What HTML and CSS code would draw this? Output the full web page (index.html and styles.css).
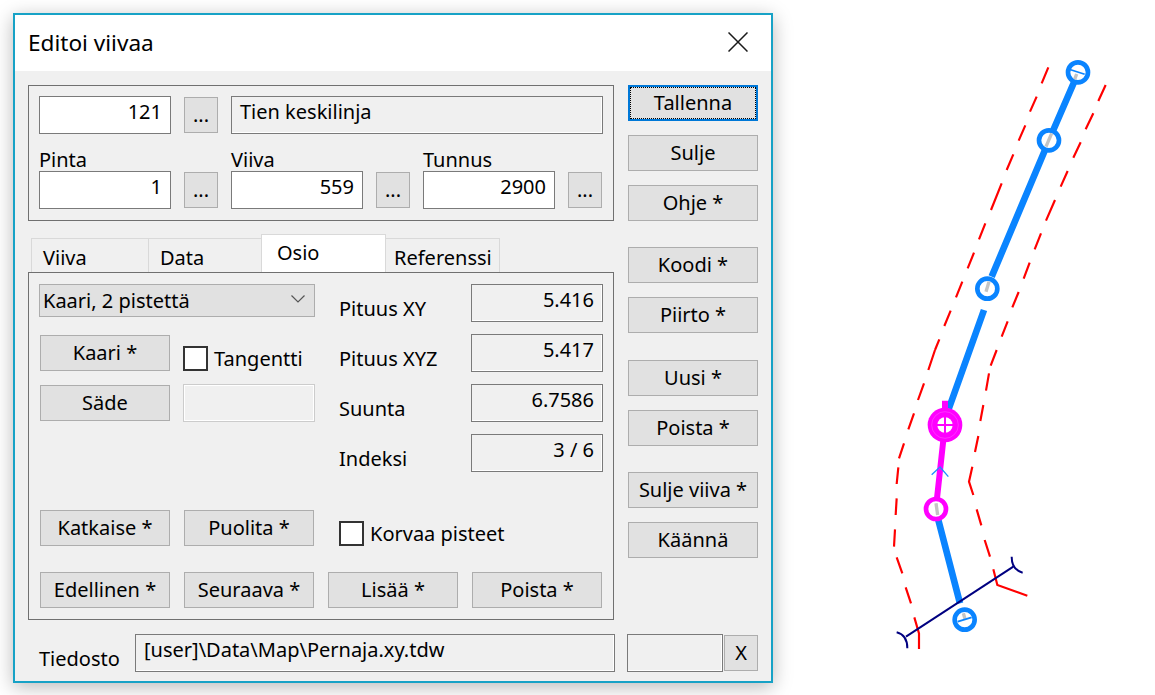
FILE: index.html
```html
<!DOCTYPE html>
<html lang="fi">
<head>
<meta charset="utf-8">
<title>Editoi viivaa</title>
<link rel="stylesheet" href="styles.css">
</head>
<body>
<div class="page">
  <div class="window">
    <div class="titlebar">
      <span class="title">Editoi viivaa</span>
      <svg class="close" width="20" height="20" viewBox="0 0 20 20"><path d="M0.5 0.5L19.5 19.5M19.5 0.5L0.5 19.5"/></svg>
    </div>
    <div class="client">
      <div class="top">
        <div class="main">
          <div class="group">
            <div class="field edit">121</div>
            <button class="btn small">...</button>
            <div class="field text wide">Tien keskilinja</div>
            <div class="cap c1">Pinta</div>
            <div class="cap c3">Viiva</div>
            <div class="cap c5">Tunnus</div>
            <div class="field edit">1</div>
            <button class="btn small">...</button>
            <div class="field edit">559</div>
            <button class="btn small">...</button>
            <div class="field edit">2900</div>
            <button class="btn small">...</button>
          </div>
          <div class="tabs">
            <div class="tab t1">Viiva</div>
            <div class="tab t2">Data</div>
            <div class="tab t3 active">Osio</div>
            <div class="tab t4">Referenssi</div>
          </div>
          <div class="panel">
            <div class="upper">
              <div class="left">
                <div class="combo">
                  <span>Kaari, 2 pistettä</span>
                  <svg width="14" height="8" viewBox="0 0 14 8"><path d="M0.5 0.5L7 7L13.5 0.5"/></svg>
                </div>
                <div class="opt-row">
                  <button class="btn">Kaari *</button>
                  <label class="check"><span class="box"></span>Tangentti</label>
                </div>
                <div class="opt-row second">
                  <button class="btn">Säde</button>
                  <div class="field disabled"></div>
                </div>
              </div>
              <div class="stats">
                <div class="stat-label">Pituus XY</div><div class="field value">5.416</div>
                <div class="stat-label">Pituus XYZ</div><div class="field value">5.417</div>
                <div class="stat-label">Suunta</div><div class="field value">6.7586</div>
                <div class="stat-label">Indeksi</div><div class="field value">3 / 6</div>
              </div>
            </div>
            <div class="btn-row middle">
              <button class="btn">Katkaise *</button>
              <button class="btn">Puolita *</button>
              <label class="check far"><span class="box"></span>Korvaa pisteet</label>
            </div>
            <div class="btn-row bottom">
              <button class="btn">Edellinen *</button>
              <button class="btn">Seuraava *</button>
              <button class="btn">Lisää *</button>
              <button class="btn">Poista *</button>
            </div>
          </div>
        </div>
        <div class="side">
          <div class="side-group">
            <button class="btn focused">Tallenna</button>
            <button class="btn">Sulje</button>
            <button class="btn">Ohje *</button>
          </div>
          <div class="side-group">
            <button class="btn">Koodi *</button>
            <button class="btn">Piirto *</button>
          </div>
          <div class="side-group shifted">
            <button class="btn">Uusi *</button>
            <button class="btn">Poista *</button>
          </div>
          <div class="side-group">
            <button class="btn">Sulje viiva *</button>
            <button class="btn">Käännä</button>
          </div>
        </div>
      </div>
      <div class="footer">
        <div class="foot-label">Tiedosto</div>
        <div class="field text path">[user]\Data\Map\Pernaja.xy.tdw</div>
        <div class="field text mini"></div>
        <button class="btn small x">X</button>
      </div>
    </div>
  </div>
  <svg class="drawing" width="382" height="695" viewBox="773 0 382 695">
    <g transform="translate(880 50) scale(0.33333)">
      <path class="red" d="M505 52L485 100M470 140L450 185M436 226L416 272M400 313L380 360M365 400L333 480M316 520L297 568M282 608L263 655M247 695L228 742M212 782L193 828M178 868L165 900"/>
      <path class="red" d="M677 105L655 153M640 190L617 238M602 277L580 323M563 363L542 410M525 450L498 512M483 550L464 598M449 638L431 686M416 726L397 772M383 814L365 860"/>
      <path class="blue-line" d="M585 90L520 240M495 300L335 680"/>
      <circle class="ring-blue" cx="594" cy="67" r="30"/>
      <path class="gray" d="M590 72L584 88"/>
      <path class="blue-bar" d="M572 59L614 73"/>
      <circle class="ring-blue" cx="507" cy="271" r="30"/>
      <path class="gray" d="M515 250L498 290"/>
      <circle class="ring-blue" cx="322" cy="716" r="30"/>
      <path class="gray" d="M327 695L318 725"/>
    </g>
    <g transform="translate(880 350) scale(0.33333)">
      <path class="red" d="M165 0L145 60M132 100L114 150M102 190L85 238M72 280L57 325M55 352L50 402M50 445L47 495M45 538L42 590M50 622L67 670M77 712L93 760M103 802L117 850L117 897"/>
      <path class="red" d="M350 0L332 47M327 70L318 122M310 165L301 213M295 258L285 306M277 350L267 395L280 435M290 478L304 526M314 570L330 620M340 658L352 705L442 737"/>
      <path class="blue-line" d="M312 -120L205 180M175 510L240 760"/>
      <path class="navy" d="M78 860L400 650"/>
      <path class="navy" d="M50 847C70 852 82 865 82 895M395 620C395 645 405 662 428 668"/>
      <path class="magenta-line" d="M195 152L195 190M190 270L171 445"/>
      <circle class="mag-fill" cx="195" cy="225" r="52"/>
      <circle class="mag-thin" cx="195" cy="225" r="40"/>
      <circle class="white-fill" cx="195" cy="225" r="23"/>
      <path class="mag-cross" d="M195 200L195 250M170 225L220 225"/>
      <path class="chevron" d="M155 374L180 351L205 380"/>
      <circle class="ring-mag" cx="168" cy="477" r="30"/>
      <path class="gray" d="M168 460L173 495"/>
      <circle class="ring-blue" cx="254" cy="809" r="30"/>
      <path class="gray" d="M250 790L255 806"/>
      <path class="blue-bar" d="M233 815L275 802"/>
    </g>
  </svg>
</div>
</body>
</html>
```

FILE: styles.css
```css
* { box-sizing: border-box; }
html, body { margin: 0; padding: 0; background: #fff; }
body { width: 1155px; height: 695px; overflow: hidden; font-family: "Noto Sans", "Open Sans", sans-serif; font-size: 20px; color: #000; }
.page { display: flex; align-items: flex-start; }
.window { flex: none; width: 760px; height: 670px; margin: 13px 0 0 13px; border: 2px solid #17a2c6; background: #f0f0f0; box-shadow: 0 4px 18px rgba(0,0,0,.28); }
.titlebar { height: 56px; background: #fff; display: flex; align-items: center; justify-content: space-between; padding: 0 23px 0 13px; }
.title { font-size: 22.6px; line-height: 30px; }
.close { margin-bottom: 3px; }
.close path { stroke: #1a1a1a; stroke-width: 1.5; fill: none; }
.client { padding: 14px 14px 0 13px; }
.top { display: flex; gap: 14px; height: 535px; }
.main { width: 586px; flex: none; }
.group { border: 1px solid #707070; height: 136px; padding: 10px 0 0 10px; display: grid; grid-template-columns: 132px 34px 132px 34px 132px 34px; column-gap: 13px; grid-template-rows: 38px 37px 38px; align-items: start; }
.field { height: 38px; border: 1px solid #7a7a7a; padding: 0 8px; line-height: 30px; white-space: nowrap; }
.edit { background: #fff; text-align: right; }
.text { box-shadow: inset -1px -1px 0 #fff; }
.wide { grid-column: 3 / 7; margin-right: -1px; }
.cap { line-height: 24px; align-self: end; margin-bottom: -1px; }
.c1 { grid-column: 1 / 3; }
.c3 { grid-column: 3 / 5; }
.c5 { grid-column: 5 / 7; }
.btn { display: block; width: 130px; height: 36px; padding: 0; border: 1px solid #adadad; background: #e1e1e1; color: #000; font: inherit; line-height: 30px; white-space: nowrap; }
.small { width: 34px; margin-top: 1px; }
.focused { border: 2px solid #0078d7; outline: 1px dotted #000; outline-offset: -3px; }
.tabs { display: flex; align-items: flex-end; height: 38px; margin-top: 13px; padding-left: 3px; }
.tab { height: 34px; border: 1px solid #d9d9d9; border-bottom: 0; line-height: 38px; }
.t1 { width: 117px; padding-left: 11px; border-right: 0; }
.t2 { width: 113px; padding-left: 11px; border-right: 0; }
.t3 { width: 125px; padding-left: 15px; }
.t4 { width: 114px; padding-left: 8px; border-left: 0; }
.active { height: 38px; background: #fff; line-height: 36px; }
.panel { height: 348px; border: 1px solid #707070; padding: 11px 10px 0; }
.upper { display: flex; gap: 24px; height: 188px; }
.left { width: 276px; flex: none; }
.combo { height: 33px; border: 1px solid #adadad; background: #e1e1e1; display: flex; align-items: center; justify-content: space-between; padding: 0 9px 0 3px; line-height: 30px; }
.combo svg { margin-bottom: 4px; }
.combo path { stroke: #555; stroke-width: 1.2; fill: none; }
.opt-row { display: flex; margin-top: 18px; height: 36px; }
.opt-row .btn { margin-left: 1px; }
.opt-row.second { margin-top: 13px; height: 38px; align-items: center; }
.check { display: flex; align-items: flex-end; gap: 6px; line-height: 24px; margin-left: 13px; }
.box { display: block; width: 25px; height: 25px; border: 2px solid #333; background: #fff; }
.disabled { width: 132px; margin-left: 13px; border-color: #ccc; box-shadow: inset 0 0 0 1px #fff; }
.stats { width: 264px; display: grid; grid-template-columns: 132px 132px; grid-auto-rows: 38px; row-gap: 12px; }
.stat-label { line-height: 50px; }
.value { text-align: right; box-shadow: inset -1px -1px 0 #fff; }
.btn-row { display: flex; gap: 14px; padding-left: 1px; }
.middle { margin-top: 38px; }
.bottom { margin-top: 26px; }
.far { margin-left: 11px; }
.side { width: 130px; flex: none; display: flex; flex-direction: column; gap: 26px; }
.side-group { display: flex; flex-direction: column; gap: 14px; }
.shifted { margin-top: 1px; }
.footer { display: flex; align-items: flex-start; margin-top: 14px; padding-left: 11px; }
.foot-label { width: 96px; flex: none; line-height: 50px; }
.path { width: 480px; flex: none; }
.mini { width: 96px; flex: none; margin-left: 12px; }
.x { margin-left: 1px; flex: none; }
.drawing { flex: none; display: block; }
.drawing path, .drawing circle { fill: none; }
.red { stroke: #f00; stroke-width: 6.5; }
.blue-line { stroke: #0a84ff; stroke-width: 20; }
.ring-blue { stroke: #0a84ff; stroke-width: 14; fill: #fff !important; }
.ring-mag { stroke: #f0f; stroke-width: 14; fill: #fff !important; }
.gray { stroke: #c4c4c4; stroke-width: 10; }
.blue-bar { stroke: #0a84ff; stroke-width: 5; }
.navy { stroke: #000080; stroke-width: 6; }
.magenta-line { stroke: #f0f; stroke-width: 18; }
.mag-fill { fill: #f0f !important; }
.mag-thin { stroke: #ff60ff; stroke-width: 1.5; }
.white-fill { fill: #fff !important; }
.mag-cross { stroke: #f0f; stroke-width: 6; }
.chevron { stroke: #1e90ff; stroke-width: 4; }
```
